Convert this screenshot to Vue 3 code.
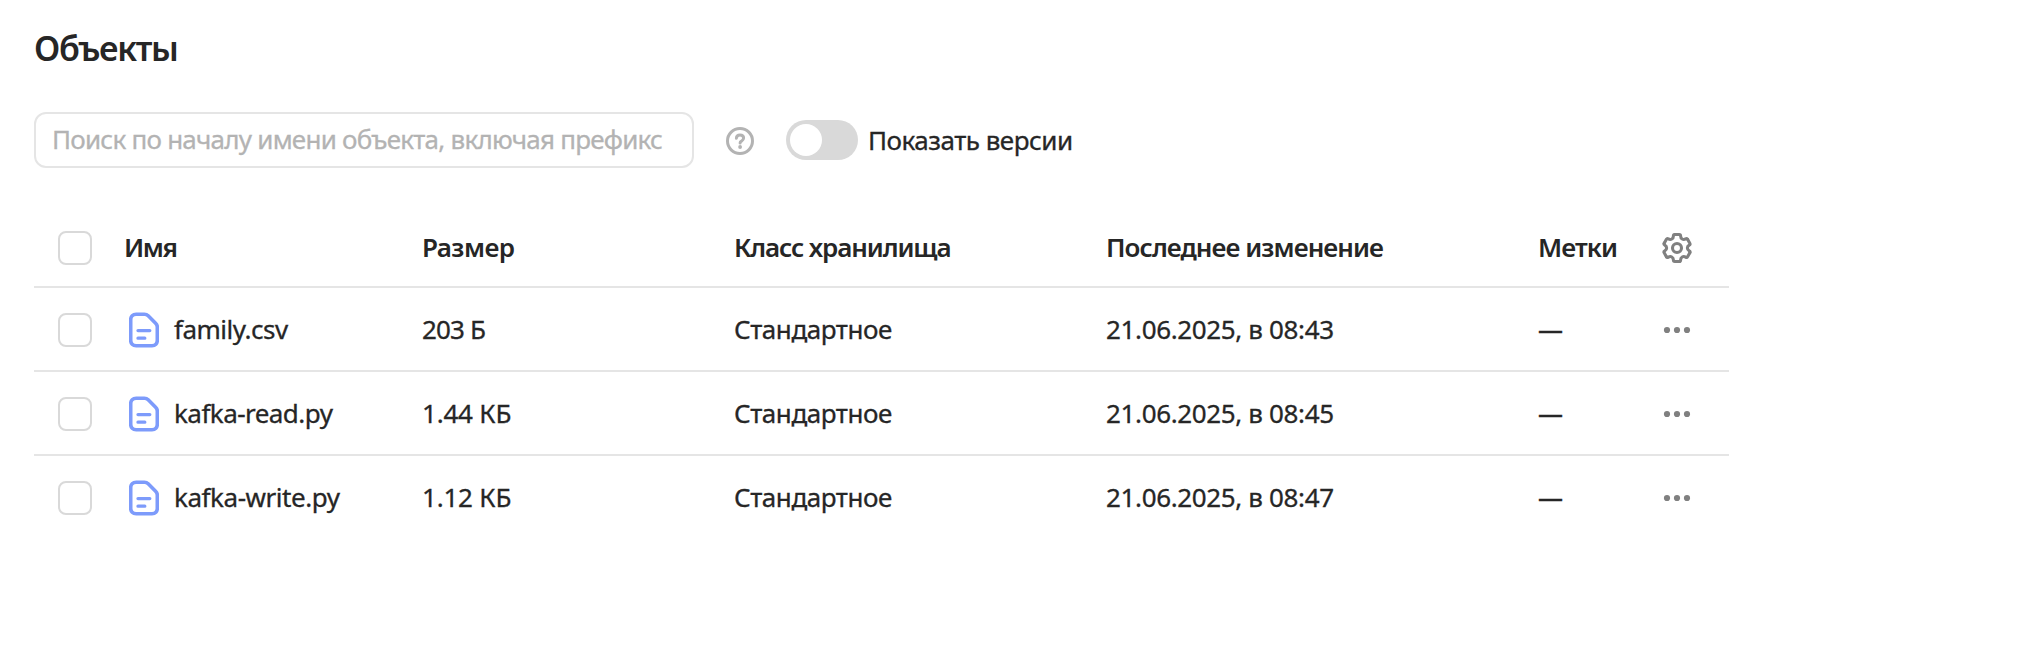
<script setup>
import { ref } from 'vue'

const columns = [
  { key: 'name', title: 'Имя' },
  { key: 'size', title: 'Размер' },
  { key: 'storage', title: 'Класс хранилища' },
  { key: 'modified', title: 'Последнее изменение' },
  { key: 'tags', title: 'Метки' },
]

const rows = [
  { id: 'family', name: 'family.csv', size: '203 Б', storage: 'Стандартное', modified: '21.06.2025, в 08:43', tags: '—' },
  { id: 'read', name: 'kafka-read.py', size: '1.44 КБ', storage: 'Стандартное', modified: '21.06.2025, в 08:45', tags: '—' },
  { id: 'write', name: 'kafka-write.py', size: '1.12 КБ', storage: 'Стандартное', modified: '21.06.2025, в 08:47', tags: '—' },
]

const prefix = ref('')
const showVersions = ref(false)
const gearAngles = [0, 60, 120, 180, 240, 300]
</script>

<template>
  <main class="page">
    <h1 class="title">Объекты</h1>

    <div class="toolbar">
      <input v-model="prefix" class="search" type="text" placeholder="Поиск по началу имени объекта, включая префикс" />
      <svg class="help" width="28" height="28" viewBox="0 0 28 28" fill="none" stroke="#b3b3b3" stroke-width="3">
        <circle cx="14" cy="14" r="12.5" />
        <path d="M10.4 11.2C10.5 9.1 12 8 14 8C16.1 8 17.6 9.2 17.6 11.1C17.6 12.7 16.7 13.4 15.5 14.1C14.5 14.6 14.1 15 14.1 15.9" stroke-linecap="round" />
        <circle cx="14.1" cy="20" r="1.9" fill="#b3b3b3" stroke="none" />
      </svg>
      <label class="switch">
        <input v-model="showVersions" class="switch-input" type="checkbox" />
        <span class="track"><span class="knob"></span></span>
        <span class="switch-label">Показать версии</span>
      </label>
    </div>

    <div class="table">
      <div class="row head">
        <span class="check"></span>
        <span v-for="c in columns" :key="c.key" :class="['cell', c.key]">{{ c.title }}</span>
        <svg class="gear" width="32" height="32" viewBox="-16 -16 32 32" fill="none" stroke="#808080" stroke-width="3.1">
          <path
            v-for="a in gearAngles"
            :key="a"
            :transform="`rotate(${a})`"
            stroke-linecap="round"
            d="M-2.2 -13.5H2.2Q3.6 -13.5 3.6 -12C3.6 -9.2 6.2 -7.7 8.59 -9.12Q9.89 -9.87 10.59 -8.66"
          />
          <circle r="4.5" />
        </svg>
      </div>

      <div v-for="r in rows" :key="r.id" class="row body">
        <span class="check"></span>
        <span class="file">
          <svg width="30" height="36" viewBox="0 0 30 36" fill="none" stroke="#7d9bfb" stroke-width="3.6" stroke-linecap="round" stroke-linejoin="round">
            <path d="M7.2 2.2H15.4C17 2.2 18.1 2.7 19.2 3.8L26.6 11.2C27.8 12.4 28.3 13.5 28.3 15V28.3C28.3 31.6 26.3 33.7 23 33.7H7.2C3.8 33.7 1.7 31.6 1.7 28.3V7.6C1.7 4.3 3.8 2.2 7.2 2.2Z" />
            <path d="M9 18.6H20.8M9 26.2H15.8" stroke-width="3.3" />
          </svg>
          <span :class="['file-name', r.id]">{{ r.name }}</span>
        </span>
        <span :class="['cell', 'size', r.id]">{{ r.size }}</span>
        <span class="cell storage">{{ r.storage }}</span>
        <span class="cell modified">{{ r.modified }}</span>
        <span class="cell tags">{{ r.tags }}</span>
        <svg class="more" width="32" height="8" viewBox="0 0 32 8" fill="#808080">
          <circle cx="6" cy="4" r="3.1" />
          <circle cx="16" cy="4" r="3.1" />
          <circle cx="26" cy="4" r="3.1" />
        </svg>
      </div>
    </div>
  </main>
</template>

<style>
body {
  background: #fff;
}
</style>

<style scoped>
.page {
  box-sizing: border-box;
  width: 1729px;
  padding: 24px 0 0 34px;
  color: #262626;
  font-family: "Noto Sans", "Open Sans", sans-serif;
  font-size: 26px;
  line-height: 36px;
}

.title {
  margin: 0 0 40px;
  font-size: 34px;
  font-weight: 600;
  line-height: 48px;
  letter-spacing: -1.3px;
}

.toolbar {
  display: flex;
  align-items: center;
  height: 56px;
}

.search {
  box-sizing: border-box;
  width: 660px;
  height: 56px;
  margin: 0;
  padding: 0 15px 2px 16px;
  border: 2px solid #e5e5e5;
  border-radius: 12px;
  outline: none;
  background: #fff;
  color: inherit;
  font: inherit;
  letter-spacing: -0.76px;
  -webkit-text-stroke: 0.3px #b3b3b3;
}

.search::placeholder {
  color: #b3b3b3;
  opacity: 1;
}

.help {
  margin: 2px 32px 0;
}

.switch {
  display: flex;
  align-items: center;
  gap: 10px;
}

.switch-input {
  position: absolute;
  opacity: 0;
  pointer-events: none;
}

.track {
  box-sizing: border-box;
  width: 72px;
  height: 40px;
  padding: 4px;
  border-radius: 20px;
  background: #d9d9d9;
}

.knob {
  display: block;
  width: 32px;
  height: 32px;
  border-radius: 50%;
  background: #fff;
}

.switch-input:checked + .track .knob {
  margin-left: 32px;
}

.switch-label {
  letter-spacing: -0.5px;
  -webkit-text-stroke: 0.3px currentColor;
}

.table {
  margin-top: 42px;
}

.row {
  box-sizing: border-box;
  display: grid;
  grid-template-columns: 66px 298px 312px 372px 432px 123px 32px;
  align-items: center;
  height: 84px;
  padding: 2px 0 0 24px;
  border-bottom: 2px solid #e5e5e5;
  white-space: nowrap;
}

.row:last-child {
  border-bottom-color: transparent;
}

.head {
  height: 78px;
  padding-top: 0;
  font-weight: 600;
}

.body {
  -webkit-text-stroke: 0.3px currentColor;
}

.check {
  box-sizing: border-box;
  width: 34px;
  height: 34px;
  border: 2px solid #d9d9d9;
  border-radius: 8px;
}

.cell,
.file-name {
  padding-bottom: 2px;
}

.file {
  display: flex;
  align-items: center;
  gap: 15px;
  padding-left: 5px;
}

.file-name.family {
  letter-spacing: -0.5px;
}

.file-name.read {
  letter-spacing: -0.54px;
}

.file-name.write {
  letter-spacing: -0.45px;
}

.head .name {
  letter-spacing: -1.4px;
}

.head .size {
  letter-spacing: -0.55px;
}

.head .storage {
  letter-spacing: -1.1px;
}

.head .modified {
  letter-spacing: -0.93px;
}

.head .tags {
  letter-spacing: -0.9px;
}

.size.family {
  letter-spacing: -0.85px;
}

.size.read,
.size.write {
  letter-spacing: -0.2px;
}

.body .storage {
  letter-spacing: -0.44px;
}

.body .modified {
  letter-spacing: -0.36px;
}

.body .tags {
  font-size: 25px;
}
</style>
